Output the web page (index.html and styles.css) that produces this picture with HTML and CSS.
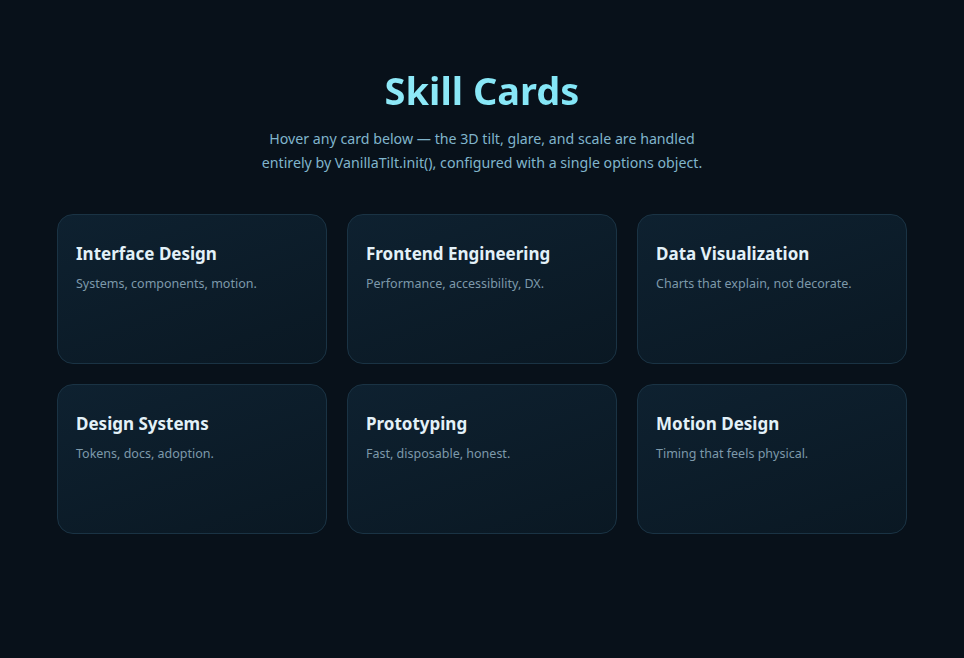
FILE: index.html
```html
<!DOCTYPE html>
<html lang="en">
<head>
<meta charset="utf-8">
<title>Skill Cards</title>
<link rel="stylesheet" href="styles.css">
</head>
<body>
<main class="page">
  <header class="intro">
    <h1 class="title">Skill Cards</h1>
    <p class="lead">Hover any card below — the 3D tilt, glare, and scale are handled entirely by VanillaTilt.init(), configured with a single options object.</p>
  </header>
  <section class="grid">
    <article class="card"><h2 class="card-title">Interface Design</h2><p class="card-text">Systems, components, motion.</p></article>
    <article class="card"><h2 class="card-title">Frontend Engineering</h2><p class="card-text">Performance, accessibility, DX.</p></article>
    <article class="card"><h2 class="card-title">Data Visualization</h2><p class="card-text">Charts that explain, not decorate.</p></article>
    <article class="card"><h2 class="card-title">Design Systems</h2><p class="card-text">Tokens, docs, adoption.</p></article>
    <article class="card"><h2 class="card-title">Prototyping</h2><p class="card-text">Fast, disposable, honest.</p></article>
    <article class="card"><h2 class="card-title">Motion Design</h2><p class="card-text">Timing that feels physical.</p></article>
  </section>
</main>
</body>
</html>
```
FILE: styles.css
```css
* { box-sizing: border-box; }
html, body { margin: 0; padding: 0; }
body {
  background: #08111a;
  color: #cfe6f2;
  font-family: "Noto Sans", "Open Sans", sans-serif;
  min-height: 100vh;
}
.page {
  width: 850px;
  margin: 0 auto;
  padding-top: 66px;
}
.intro { text-align: center; }
.title {
  margin: 0;
  font-size: 38px;
  line-height: 48px;
  font-weight: 700;
  color: #8ae6f7;
  background: linear-gradient(90deg, #a3eef9, #6fe1f5);
  -webkit-background-clip: text;
  background-clip: text;
  -webkit-text-fill-color: transparent;
}
.lead {
  margin: 13px auto 0;
  max-width: 450px;
  font-size: 14.2px;
  line-height: 24px;
  color: #80b5cc;
}
.grid {
  margin-top: 39px;
  display: grid;
  grid-template-columns: repeat(3, 1fr);
  gap: 20px 20px;
}
.card {
  height: 150px;
  border-radius: 16px;
  border: 1px solid #1a3344;
  background: linear-gradient(160deg, #0e2130 0%, #0a1823 100%);
  padding: 27px 18px 20px;
}
.card-title {
  margin: 0;
  font-size: 17px;
  line-height: 24px;
  font-weight: 700;
  color: #e3f1f8;
}
.card-text {
  margin: 9px 0 0;
  font-size: 12.5px;
  line-height: 18px;
  color: #7d99aa;
}
```
